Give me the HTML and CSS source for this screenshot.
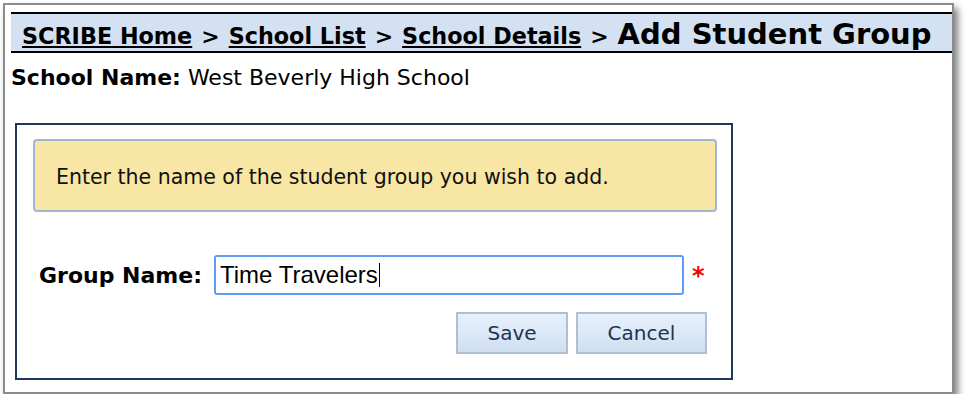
FILE: index.html
```html
<!DOCTYPE html>
<html lang="en">
<head>
<meta charset="utf-8">
<title>Add Student Group</title>
<link rel="stylesheet" href="styles.css">
</head>
<body>
<div class="frame">
  <div class="page">
    <div class="crumbs">
      <a href="#" class="crumb">SCRIBE Home</a>
      <span class="sep">&gt;</span>
      <a href="#" class="crumb">School List</a>
      <span class="sep">&gt;</span>
      <a href="#" class="crumb">School Details</a>
      <span class="sep">&gt;</span>
      <span class="current">Add Student Group</span>
    </div>
    <div class="school"><b>School Name:</b> West Beverly High School</div>
    <div class="formbox">
      <div class="notice">Enter the name of the student group you wish to add.</div>
      <div class="row">
        <label class="label">Group Name:</label>
        <div class="input">Time Travelers<span class="caret"></span></div>
        <span class="req">*</span>
      </div>
      <div class="buttons">
        <button class="btn btn-save">Save</button>
        <button class="btn btn-cancel">Cancel</button>
      </div>
    </div>
  </div>
</div>
</body>
</html>
```
FILE: styles.css
```css
html, body {
  margin: 0;
  padding: 0;
  background: #ffffff;
}
body {
  font-family: "DejaVu Sans", Verdana, sans-serif;
  color: #000;
}
.frame {
  margin: 3px 0 0 3px;
  width: 947px;
  height: 387px;
  border: 2px solid #8c8c8c;
  box-shadow: 4px 5px 7px rgba(0, 0, 0, 0.5);
  background: #fff;
  box-sizing: content-box;
}
.page {
  padding: 7px 0 0 6px;
}
.crumbs {
  display: flex;
  align-items: baseline;
  gap: 9px;
  height: 34px;
  padding-top: 3px;
  box-sizing: content-box;
  border-top: 2px solid #000;
  border-bottom: 2px solid #000;
  background: #d3e1f2;
  padding-left: 11px;
  line-height: 34px;
  white-space: nowrap;
  overflow: hidden;
}
.crumbs > * {
  flex-shrink: 0;
}
.crumb {
  font-weight: bold;
  font-size: 22.3px;
  color: #000;
  text-decoration: underline;
  text-underline-offset: 2px;
}
.sep {
  font-weight: bold;
  font-size: 22px;
}
.current {
  font-weight: bold;
  font-size: 29px;
}
.school {
  margin-top: 12px;
  font-size: 22px;
  line-height: 25px;
}
.formbox {
  margin: 33px 0 0 4px;
  border: 2px solid #1e375a;
  padding-top: 14px;
  box-sizing: border-box;
  height: 257px;
  width: 718px;
  display: flex;
  flex-direction: column;
}
.notice {
  margin-left: 16px;
  width: 684px;
  height: 73px;
  box-sizing: border-box;
  border: 2px solid #a3b5d0;
  border-radius: 4px;
  background: #f8e6a4;
  display: flex;
  align-items: center;
  padding-left: 21px;
  padding-top: 2px;
  font-size: 20.5px;
  color: #111;
}
.row {
  margin-top: 43px;
  display: flex;
  align-items: center;
  padding-left: 22px;
}
.label {
  width: 175px;
  font-weight: bold;
  font-size: 22px;
}
.input {
  width: 470px;
  height: 40px;
  box-sizing: border-box;
  border: 2px solid #5d9df2;
  border-radius: 3px;
  padding-left: 4px;
  font-family: "Liberation Sans", Arial, sans-serif;
  font-size: 24px;
  display: flex;
  align-items: center;
  color: #000;
}
.caret {
  display: inline-block;
  width: 1px;
  height: 24px;
  background: #000;
  margin-left: 1px;
}
.req {
  margin-left: 8px;
  color: #f00;
  font-size: 24px;
  font-weight: bold;
  line-height: 1;
  position: relative;
  top: 1px;
}
.buttons {
  margin-top: 17px;
  display: flex;
  justify-content: flex-end;
  gap: 8px;
  padding-right: 24px;
}
.btn {
  height: 42px;
  border: 2px solid #aebfd6;
  background: linear-gradient(#e7f1fc, #cfdff1);
  font-family: "DejaVu Sans", Verdana, sans-serif;
  font-size: 20px;
  color: #1f3450;
  padding: 0;
  border-radius: 0;
}
.btn-save {
  width: 112px;
}
.btn-cancel {
  width: 131px;
}
```
